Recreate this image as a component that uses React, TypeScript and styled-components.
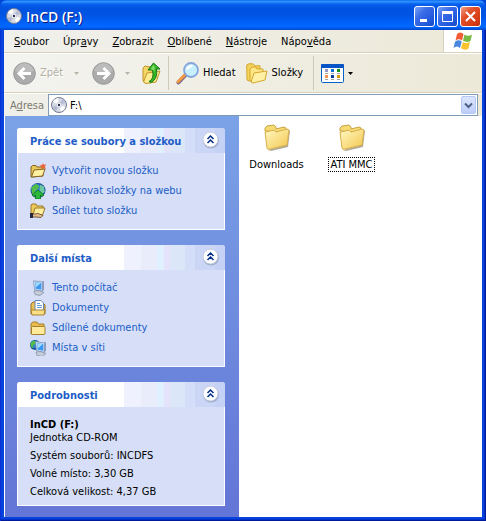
import React from "react";
import styled, { createGlobalStyle } from "styled-components";

const Global = createGlobalStyle`
  * { box-sizing: border-box; }
  body {
    margin: 0;
    background: #0046d5;
    font-family: "DejaVu Sans Condensed", "Noto Sans", "Liberation Sans", sans-serif;
    font-size: 11px;
    line-height: 14px;
    color: #000;
  }
  button, input { font: inherit; color: inherit; }
  svg { display: block; flex: none; }
`;

const Window = styled.div`
  display: flex;
  flex-direction: column;
  min-height: 100vh;
  padding: 0 4px 4px;
  border-radius: 7px 7px 0 0;
  background: #0842dc;
  box-shadow: inset 1px 0 #0831d9, inset -1px -1px #001a9c, inset -2px -2px #0030c8;
`;

const TitleBar = styled.header`
  display: flex;
  align-items: center;
  gap: 4px;
  height: 30px;
  margin: 0 -4px;
  padding: 2px 5px 0 6px;
  border-radius: 7px 7px 0 0;
  background: linear-gradient(#0058ee 0, #3593ff 1px, #288eff 2px, #0a60ee 4px, #0053e0 8px, #0055e5 16px, #0066ff 25px, #0066ff 27px, #0046c8 30px);
`;

const Title = styled.h1`
  flex: 1;
  margin: 0;
  padding-top: 2px;
  font-family: "Open Sans", "Noto Sans", sans-serif;
  font-size: 14px;
  line-height: 18px;
  font-weight: 600;
  color: #fff;
  text-shadow: 1px 1px #0a1883;
`;

const Caption = styled.div`
  display: flex;
  gap: 2px;
`;

const CaptionButton = styled.button<{ $close?: boolean }>`
  display: grid;
  place-items: center;
  width: 21px;
  height: 21px;
  padding: 0;
  border: 1px solid #fff;
  border-radius: 3px;
  background: ${(p) => (p.$close ? "linear-gradient(135deg, #f0a088, #e2512c 35%, #d83c14 75%, #b83010)" : "linear-gradient(135deg, #7ba2f5, #3a6ce8 35%, #2258dc 75%, #1848c0)")};
`;

const MenuBar = styled.nav`
  display: flex;
  height: 23px;
  padding-left: 3px;
  border-bottom: 1px solid #d8d2bd;
  background: linear-gradient(90deg, #f0f0ec, #ece9d8);
`;

const MenuItem = styled.button`
  padding: 1px 7px 0;
  border: 0;
  background: none;
  white-space: nowrap;
`;

const Flag = styled.div`
  display: grid;
  place-items: center;
  width: 39px;
  margin-left: auto;
  border-left: 1px solid #d8d2bd;
  background: #fff;
`;

const ToolBar = styled.div`
  display: flex;
  align-items: center;
  height: 40px;
  padding-left: 9px;
  border-top: 1px solid #fff;
  border-bottom: 1px solid #d8d2bd;
  background: linear-gradient(90deg, #f3f3f0, #efede1 60%, #ece9d8);
`;

const Tool = styled.button<{ $end?: number }>`
  display: flex;
  align-items: center;
  gap: 4px;
  padding: 0;
  margin-right: ${(p) => p.$end ?? 0}px;
  border: 0;
  background: none;
  white-space: nowrap;
  &:disabled { color: #b3b0a4; text-shadow: 1px 1px #fff; }
`;

const Separator = styled.span`
  width: 1px;
  height: 34px;
  margin-right: 7px;
  background: #cfcbb9;
`;

const AddressBar = styled.div`
  display: flex;
  align-items: center;
  gap: 5px;
  height: 23px;
  padding: 0 4px 0 6px;
  border-top: 1px solid #fff;
  background: linear-gradient(90deg, #f0f0ea, #ece9d8);
`;

const AddressLabel = styled.label`
  width: 33px;
  padding-top: 2px;
  color: #7c7a6f;
`;

const Combo = styled.div`
  display: flex;
  flex: 1;
  align-items: center;
  gap: 3px;
  height: 22px;
  padding: 0 1px 0 2px;
  border: 1px solid #7f9db9;
  background: #fff;
`;

const AddressInput = styled.input`
  flex: 1;
  min-width: 0;
  padding: 2px 0 0;
  border: 0;
  outline: 0;
  background: none;
`;

const DropButton = styled.button`
  display: grid;
  place-items: center;
  width: 15px;
  height: 18px;
  padding: 0;
  border: 1px solid #b4c8f6;
  border-radius: 2px;
  background: linear-gradient(#dce6ff, #bccdf8);
`;

const Content = styled.div`
  display: flex;
  flex: 1;
  border-left: 1px solid #fff;
  background: #fff;
`;

const SidePane = styled.aside`
  display: flex;
  flex-direction: column;
  gap: 15px;
  width: 234px;
  padding: 12px 14px 11px 12px;
  background: linear-gradient(#7ba2e7, #6375d6);
`;

const Panel = styled.section`
  background: #d6dff7;
  border-radius: 3px 3px 0 0;
`;

const PanelHead = styled.div`
  display: flex;
  align-items: flex-start;
  justify-content: space-between;
  height: 25px;
  padding: 2px 5px 0 13px;
  border-radius: 3px 3px 0 0;
  background: linear-gradient(90deg, #fff 107px, #f0f1fe 107px 124px, #e9ecfb 124px 140px, #e0f0ff 140px 147px, #e4e3fb 147px 153px, #dbe6f9 153px 168px, #d5def8 168px 178px, #cbd6f6 178px 198px, #c6d2f5 198px);
`;

const PanelTitle = styled.h2`
  margin: 5px 0 0;
  font-size: 11px;
  line-height: 14px;
  font-weight: bold;
  color: #215dc6;
  white-space: nowrap;
`;

const Chevron = styled.button`
  display: grid;
  padding: 0;
  border: 0;
  background: none;
`;

const Tasks = styled.ul`
  display: flex;
  flex-direction: column;
  margin: 0;
  padding: 8px 12px;
  border: 1px solid #fff;
  border-top: 0;
  list-style: none;
`;

const TaskLink = styled.a`
  display: flex;
  align-items: center;
  gap: 6px;
  height: 20px;
  color: #215dc6;
  text-decoration: none;
  white-space: nowrap;
`;

const Details = styled.div`
  display: flex;
  flex-direction: column;
  gap: 4px;
  padding: 11px 12px 6px;
  border: 1px solid #fff;
  border-top: 0;
`;

const Line = styled.p`
  margin: 0;
  line-height: 14px;
`;

const Name = styled.strong`
  display: block;
  line-height: 13px;
`;

const Files = styled.main`
  display: flex;
  flex: 1;
  align-items: flex-start;
  padding-top: 8px;
`;

const File = styled.button`
  display: flex;
  flex-direction: column;
  align-items: center;
  gap: 5px;
  width: 75px;
  padding: 0;
  border: 0;
  background: none;
  white-space: nowrap;
`;

const FileName = styled.span<{ $focused?: boolean }>`
  padding: 0 1px;
  line-height: 13px;
  border: 1px ${(p) => (p.$focused ? "dotted #000" : "solid transparent")};
`;

const Disc = ({ size = 16 }: { size?: number }) => (
  <svg width={size} height={size} viewBox="0 0 16 16">
    <circle cx="8" cy="8" r="7.5" fill="#d7dbe6" stroke="#737b92" />
    <path d="M8 8L1.8 4.8A7 7 0 0 1 7 1Z" fill="#fff" />
    <path d="M8 8L14.5 10A7 7 0 0 1 10 14.6Z" fill="#fff" />
    <path d="M8 8L11 2A7 7 0 0 1 14.8 6Z" fill="#b9bed8" />
    <path d="M8 8L5 14A7 7 0 0 1 1.4 10Z" fill="#b3b9cc" />
    <circle cx="8" cy="8" r="2.6" fill="#fff" stroke="#b4b8c8" strokeWidth=".6" />
    <circle cx="8" cy="8" r="1.2" fill="#222c50" />
  </svg>
);

const Triangle = ({ color }: { color: string }) => (
  <svg width="5" height="3" viewBox="0 0 5 3"><path d="M0 0H5L2.5 3Z" fill={color} /></svg>
);

const Round = ({ forward }: { forward?: boolean }) => (
  <svg width="23" height="23" viewBox="0 0 23 23">
    <circle cx="11.5" cy="11.5" r="10.8" fill="#ababab" stroke="#999" />
    <path d="M2 9A9.7 9.7 0 0 1 21 9Q11 12 2 9Z" fill="#bcbcbc" />
    <path
      d={forward ? "M5 11.5H17M11.5 6L17 11.5L11.5 17" : "M18 11.5H6M11.5 6L6 11.5L11.5 17"}
      fill="none" stroke="#fff" strokeWidth="2.8"
    />
  </svg>
);

const UpFolder = () => (
  <svg width="19" height="23" viewBox="0 0 19 23">
    <path d="M1 6L3 4L8 5L9 7L13 7V18L3 21L1 19Z" fill="#f5d665" stroke="#bd952a" />
    <path d="M1.5 20L5 11L18 9L14 20L4 21.5Z" fill="#ffeb91" stroke="#bd952a" />
    <path d="M7 19.5Q12.5 17 10.5 8H6L11.5 1L18 7H14.5Q16 17 9 20.5Z" fill="#35b228" stroke="#147a12" />
    <path d="M8.5 7L11.5 3L13 5Q12 7 12.5 10Q11 7.5 8.5 7Z" fill="#7fdc62" />
  </svg>
);

const Magnifier = () => (
  <svg width="23" height="23" viewBox="0 0 23 23">
    <path d="M9.5 13L2.5 20.5" stroke="#7d6787" strokeWidth="4" strokeLinecap="round" />
    <path d="M9 12.7L2 19.8" stroke="#f39b42" strokeWidth="2.8" strokeLinecap="round" />
    <circle cx="15" cy="8" r="7" fill="#c8effc" stroke="#84a6dc" strokeWidth="1.8" />
    <path d="M10 8Q11 3 17 3Q16 6 10 8Z" fill="#fff" />
  </svg>
);

const Folders = () => (
  <svg width="22" height="21" viewBox="0 0 22 21">
    <path d="M1 17L.7 2L3 .8H7L9 2.8H14V15L3 18Z" fill="#f4d35b" stroke="#d3a62d" />
    <path d="M4 18V6L6 4H10L11 6H17V17L7 19Z" fill="#ffe684" stroke="#d3a62d" />
    <path d="M5 19L8 10L21 8L19 17L7 20Z" fill="#fff0a4" stroke="#d3a62d" />
  </svg>
);

const Views = () => (
  <svg width="23" height="19" viewBox="0 0 23 19">
    <rect x=".5" y=".5" width="22" height="18" rx="1" fill="#fff" stroke="#0062c9" />
    <rect width="23" height="4" rx="1" fill="#0755c5" />
    {["#9a98c3", "#0871d0", "#12921a", "#fb9150", "#073f96", "#d59a05"].map((color, i) => (
      <g key={i} transform={`translate(${4 + (i % 3) * 6} ${5 + Math.floor(i / 3) * 6})`}>
        <rect width="3" height="3" fill={color} /><rect y="4" width="3" height="1" fill="#a4a4a4" />
      </g>
    ))}
  </svg>
);

const WindowsFlag = () => (
  <svg width="20" height="18" viewBox="0 0 20 18">
    <path d="M4 2Q7-1 10.5 2L9 8.5Q6 6 2.5 8.5Z" fill="#f15b35" />
    <path d="M11.5 2.5Q15 5 19 2.5L17.5 9Q14 11 10 8.8Z" fill="#79ba45" />
    <path d="M2 9.7Q6 7 8.7 9.7L7 16Q4 13 .5 16Z" fill="#4a88df" />
    <path d="M9.8 10Q13 12 17 10L15.5 16.5Q12 19 8 16.2Z" fill="#fac32d" />
  </svg>
);

const RoundChevron = () => (
  <svg width="19" height="19" viewBox="0 0 19 19">
    <circle cx="10" cy="10.5" r="8" fill="#9fabca" />
    <circle cx="9.5" cy="9.5" r="7.5" fill="#fff" stroke="#c3cbe0" />
    <path d="M6.5 9L9.5 6L12.5 9M6.5 13L9.5 10L12.5 13" fill="none" stroke="#002c86" strokeWidth="1.5" />
  </svg>
);

const BigFolder = () => (
  <svg width="28" height="28" viewBox="0 0 28 28">
    <defs>
      <linearGradient id="folderFace" x1="0" y1="0" x2="1" y2="1">
        <stop offset="0" stopColor="#fff9c4" /><stop offset="1" stopColor="#f3c64c" />
      </linearGradient>
    </defs>
    <path d="M5 26L24 21L26 6L27 7L25 23L8 27Z" fill="#b1ac98" />
    <path d="M2 7V4L4 2L11 1L13 3V5L21 3L23 4V8Z" fill="#f6da72" stroke="#c9a244" />
    <path d="M2 8L4 24L5 25.5L24 21L26 6L24 5L13 8L11 6L3 8Z" fill="url(#folderFace)" stroke="#d8ae4a" />
  </svg>
);

type IconKind = "new" | "publish" | "share" | "computer" | "docs" | "folder" | "network";

const Screen = () => (
  <>
    <path d="M4 11L9 10.5L14 12.5L10 15.5L5 14.5Z" fill="#c6cdd8" stroke="#808a9c" strokeWidth=".7" />
    <path d="M12 2L14 .8V10L12 11Z" fill="#8f9db8" />
    <path d="M3.5 .8L12.5 1.8V11.2L4.5 9.8Z" fill="#cfe0f6" stroke="#7d93ba" strokeWidth=".8" />
    <path d="M5 2.3L11.3 3V9.7L5.6 8.7Z" fill="#3b97f0" />
    <path d="M5.3 2.6L10.6 3.2L5.7 7.6Z" fill="#a0dcff" />
  </>
);

const Globe = ({ r, cx, cy }: { r: number; cx: number; cy: number }) => (
  <g transform={`translate(${cx} ${cy}) scale(${r})`}>
    <circle r="1" fill="#174f9e" />
    <circle cx="-.15" cy="-.15" r=".75" fill="#2c7fd4" />
    <path d="M-.9-.4L-.3-.9L.2-.6L-.1-.1L-.4.1L-.3.6L-.8.4Z" fill="#54bd49" />
    <path d="M.3-.8L.8-.5L.9.2L.5.5L.2-.1Z" fill="#6fc9a0" />
  </g>
);

const TaskIcon = ({ kind }: { kind: IconKind }) => (
  <svg width="16" height="16" viewBox="0 0 16 16">
    {kind === "new" && (
      <>
        <path d="M1 14V4L2.5 2.5H6L7 4H13V13L2 14Z" fill="#eac75a" stroke="#846526" />
        <path d="M1.5 14L4 7L15 6L12.5 13Z" fill="#fff1a0" stroke="#846526" />
        <path d="M13 0L14 2L16 1L15 4L16 6L13 5L11 6L11.5 3.5L9.5 2L12 2Z" fill="#ec6438" />
      </>
    )}
    {kind === "publish" && (
      <>
        <Globe r={7.5} cx={8} cy={7.5} />
        <path d="M8 7L14 12L12 13.5L10.5 12V16H5.5V12L4 13.5L2 12Z" fill="#2cb63c" stroke="#08741a" strokeWidth=".8" />
      </>
    )}
    {kind === "share" && (
      <>
        <path d="M1 11V2L2 1H6L7 3H13V10Z" fill="#edca56" stroke="#9c782b" />
        <path d="M3 12L5 5H15L12.5 12Z" fill="#fff0a0" stroke="#9c782b" />
        <path d="M2 11H5L8 10.5L13 12.5L11 14.5L6 14H2Z" fill="#e9bd8b" stroke="#5d4026" strokeWidth=".8" />
        <path d="M0 10H3V15H0Z" fill="#252b3e" />
      </>
    )}
    {kind === "computer" && <Screen />}
    {kind === "docs" && (
      <>
        <path d="M1 14V4L3 2H12L15 5V14Z" fill="#e9c054" stroke="#99721f" />
        <path d="M5 .5H11L13.5 3V11H5Z" fill="#fff" stroke="#6587b8" />
        <path d="M7 3.5H10M7 5.5H12M7 7.5H12" stroke="#649bd9" />
        <path d="M1 10H15L14 15H2Z" fill="#f9de86" stroke="#a98331" />
      </>
    )}
    {kind === "folder" && (
      <>
        <path d="M1 14V4L2.5 2H7L8.5 4H14V14Z" fill="#e8bb4c" stroke="#a6802d" />
        <rect x="1.5" y="6.5" width="13.5" height="8" rx="1" fill="#ffe99a" stroke="#a6802d" />
      </>
    )}
    {kind === "network" && (
      <>
        <Globe r={5} cx={5} cy={5} />
        <g transform="translate(2 1)"><Screen /></g>
      </>
    )}
  </svg>
);

const menus: [string, string, string][] = [
  ["", "S", "oubor"], ["Úpr", "a", "vy"], ["", "Z", "obrazit"],
  ["", "O", "blíbené"], ["", "N", "ástroje"], ["Nápo", "v", "ěda"],
];

const groups: { title: string; items: [IconKind, string][] }[] = [
  { title: "Práce se soubory a složkou", items: [["new", "Vytvořit novou složku"], ["publish", "Publikovat složky na webu"], ["share", "Sdílet tuto složku"]] },
  { title: "Další místa", items: [["computer", "Tento počítač"], ["docs", "Dokumenty"], ["folder", "Sdílené dokumenty"], ["network", "Místa v síti"]] },
];

const PanelHeader = ({ title }: { title: string }) => (
  <PanelHead>
    <PanelTitle>{title}</PanelTitle>
    <Chevron aria-label={title}><RoundChevron /></Chevron>
  </PanelHead>
);

export default function App() {
  return (
    <>
      <Global />
      <Window>
        <TitleBar>
          <Disc />
          <Title>InCD (F:)</Title>
          <Caption>
            <CaptionButton aria-label="Minimalizovat">
              <svg width="13" height="13"><path d="M2 10.5H9" stroke="#fff" strokeWidth="3" /></svg>
            </CaptionButton>
            <CaptionButton aria-label="Maximalizovat">
              <svg width="13" height="13"><path d="M1.5 2V11.5H11.5V2" fill="none" stroke="#fff" /><path d="M1 2.5H12" stroke="#fff" strokeWidth="3" /></svg>
            </CaptionButton>
            <CaptionButton $close aria-label="Zavřít">
              <svg width="13" height="13"><path d="M2 2L11 11M11 2L2 11" stroke="#fff" strokeWidth="2" /></svg>
            </CaptionButton>
          </Caption>
        </TitleBar>
        <MenuBar>
          {menus.map(([before, key, after]) => (
            <MenuItem key={before + key + after}>{before}<u>{key}</u>{after}</MenuItem>
          ))}
          <Flag><WindowsFlag /></Flag>
        </MenuBar>
        <ToolBar>
          <Tool disabled $end={11}><Round />Zpět</Tool>
          <Tool disabled $end={13} aria-label="Historie zpět"><Triangle color="#b8b5a8" /></Tool>
          <Tool disabled $end={10} aria-label="Vpřed"><Round forward /></Tool>
          <Tool disabled $end={12} aria-label="Historie vpřed"><Triangle color="#b8b5a8" /></Tool>
          <Tool $end={7} aria-label="Nahoru"><UpFolder /></Tool>
          <Separator />
          <Tool $end={10}><Magnifier />Hledat</Tool>
          <Tool $end={10}><Folders />Složky</Tool>
          <Separator />
          <Tool aria-label="Zobrazení"><Views /><Triangle color="#000" /></Tool>
        </ToolBar>
        <AddressBar>
          <AddressLabel htmlFor="address">A<u>d</u>resa</AddressLabel>
          <Combo>
            <Disc />
            <AddressInput id="address" defaultValue={"F:\\"} />
            <DropButton aria-label="Rozbalit">
              <svg width="9" height="7"><path d="M1 1.5L4.5 5L8 1.5" fill="none" stroke="#4d6185" strokeWidth="2" /></svg>
            </DropButton>
          </Combo>
        </AddressBar>
        <Content>
          <SidePane>
            {groups.map((group) => (
              <Panel key={group.title}>
                <PanelHeader title={group.title} />
                <Tasks>
                  {group.items.map(([kind, label]) => (
                    <li key={label}><TaskLink href="#"><TaskIcon kind={kind} />{label}</TaskLink></li>
                  ))}
                </Tasks>
              </Panel>
            ))}
            <Panel>
              <PanelHeader title="Podrobnosti" />
              <Details>
                <Line><Name>InCD (F:)</Name>Jednotka CD-ROM</Line>
                <Line>Systém souborů: INCDFS</Line>
                <Line>Volné místo: 3,30 GB</Line>
                <Line>Celková velikost: 4,37 GB</Line>
              </Details>
            </Panel>
          </SidePane>
          <Files>
            <File><BigFolder /><FileName>Downloads</FileName></File>
            <File><BigFolder /><FileName $focused>ATI MMC</FileName></File>
          </Files>
        </Content>
      </Window>
    </>
  );
}
